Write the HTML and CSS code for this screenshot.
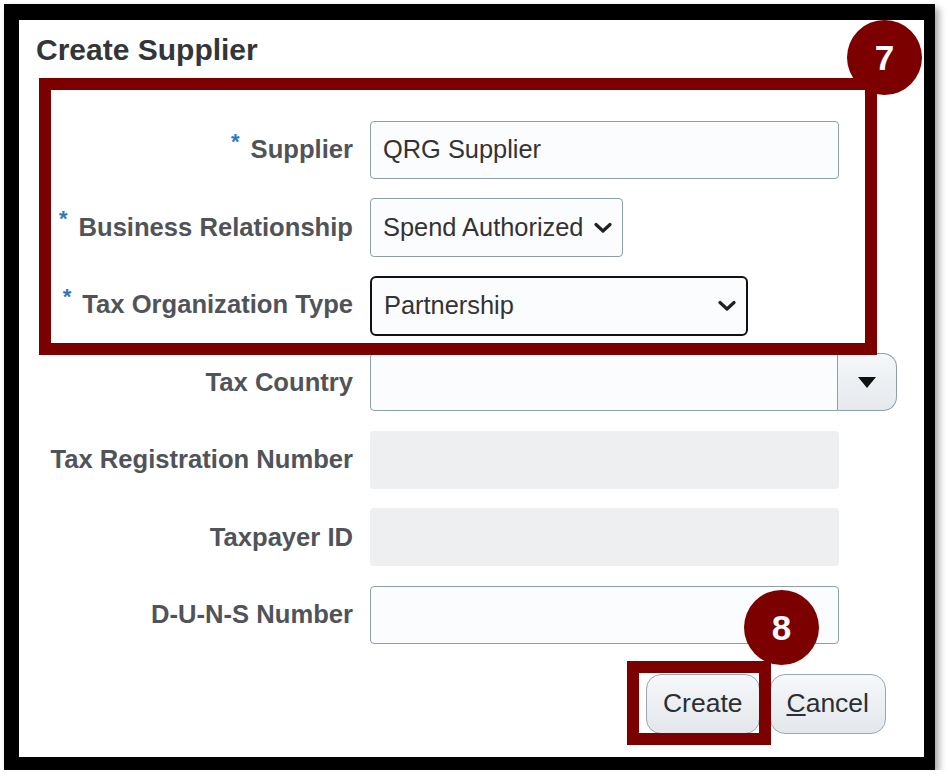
FILE: index.html
```html
<!DOCTYPE html>
<html lang="en">
<head>
  <meta charset="UTF-8">
  <meta name="viewport" content="width=device-width, initial-scale=1.0">
  <title>Create Supplier</title>
  <link rel="stylesheet" href="styles.css">
</head>
<body>
  <div class="marco">
    <h1 class="titulo">Create Supplier</h1>
    <div class="formulario">
      <label class="etiqueta"><span class="req">*</span>Supplier</label>
      <div class="campo ancho"><span>QRG Supplier</span></div>

      <label class="etiqueta"><span class="req">*</span>Business Relationship</label>
      <div class="campo lista corto">
        <span>Spend Authorized</span>
        <svg class="chevron" width="18" height="12" viewBox="0 0 18 12"><path d="M2 2.5 L9 9 L16 2.5" fill="none" stroke="#222" stroke-width="3.2" stroke-linecap="round" stroke-linejoin="round"/></svg>
      </div>

      <label class="etiqueta"><span class="req">*</span>Tax Organization Type</label>
      <div class="campo lista medio activo">
        <span>Partnership</span>
        <svg class="chevron" width="18" height="12" viewBox="0 0 18 12"><path d="M2 2.5 L9 9 L16 2.5" fill="none" stroke="#222" stroke-width="3.2" stroke-linecap="round" stroke-linejoin="round"/></svg>
      </div>

      <label class="etiqueta">Tax Country</label>
      <div class="combo">
        <div class="campo combo-texto"></div>
        <div class="combo-boton">
          <svg width="20" height="13" viewBox="0 0 20 13"><path d="M1 1 H19 L10 12 Z" fill="#111"/></svg>
        </div>
      </div>

      <label class="etiqueta">Tax Registration Number</label>
      <div class="campo ancho inactivo"></div>

      <label class="etiqueta">Taxpayer ID</label>
      <div class="campo ancho inactivo"></div>

      <label class="etiqueta">D-U-N-S Number</label>
      <div class="campo ancho"></div>
    </div>

    <div class="acciones">
      <button class="boton">Create</button>
      <button class="boton"><u>C</u>ancel</button>
    </div>

    <div class="resalte resalte-form"></div>
    <div class="resalte resalte-boton"></div>
    <div class="paso paso-7">7</div>
    <div class="paso paso-8">8</div>
  </div>
</body>
</html>
```

FILE: styles.css
```css
body {
  margin: 0;
  background: #fff;
  font-family: "Liberation Sans", Arial, sans-serif;
}
.marco {
  position: relative;
  box-sizing: border-box;
  width: 931px;
  height: 766px;
  margin: 4px 0 0 4px;
  border-style: solid;
  border-color: #000;
  border-width: 16px 11px 13px 15px;
  box-shadow: 4px 4px 7px rgba(0,0,0,0.35);
  background: #fff;
  padding: 13px 0 0 17px;
}
.titulo {
  margin: 0;
  font-size: 30px;
  font-weight: bold;
  line-height: normal;
  color: #333639;
}
.formulario {
  display: grid;
  grid-template-columns: 317px 1fr;
  grid-auto-rows: 58px;
  column-gap: 17px;
  row-gap: 19.5px;
  margin-top: 53.5px;
}
.etiqueta {
  display: flex;
  align-items: center;
  justify-content: flex-end;
  font-size: 25.6px;
  font-weight: bold;
  color: #505459;
  white-space: nowrap;
}
.req {
  color: #2a7ab9;
  font-size: 22px;
  margin-right: 11px;
  position: relative;
  top: -8px;
}
.campo {
  box-sizing: border-box;
  height: 58px;
  display: flex;
  align-items: center;
  padding: 0 12px;
  border: 1.5px solid #8d9fac;
  border-radius: 4px;
  background: #fbfcfe;
  font-size: 25.4px;
  color: #333;
}
.ancho {
  width: 469px;
}
.corto {
  width: 253px;
  height: 59px;
}
.medio {
  width: 378px;
  height: 60px;
}
.lista {
  justify-content: space-between;
  padding-right: 10px;
}
.activo {
  border: 2.5px solid #111;
  border-radius: 6px;
}
.inactivo {
  border: none;
  background: #eeeff1;
}
.combo {
  display: flex;
  height: 58px;
}
.combo-texto {
  width: 468px;
  border-radius: 4px 0 0 4px;
}
.combo-boton {
  box-sizing: border-box;
  width: 59px;
  height: 58px;
  display: flex;
  align-items: center;
  justify-content: center;
  border: 1.5px solid #8d9fac;
  border-left: none;
  border-radius: 0 14px 14px 0;
  background: linear-gradient(#f5f7f9, #e5e9ed);
}
.acciones {
  display: flex;
  justify-content: flex-end;
  gap: 10px;
  margin: 30px 38px 0 0;
}
.boton {
  box-sizing: border-box;
  height: 60px;
  padding: 0 16px;
  font-family: "Liberation Sans", Arial, sans-serif;
  font-size: 26.5px;
  color: #2b2f33;
  border: 1.5px solid #97a8b5;
  border-radius: 15px;
  background: linear-gradient(#f6f8fa, #e3e7eb);
}
.resalte {
  position: absolute;
  box-sizing: border-box;
  border: 12px solid #7c0000;
}
.resalte-form {
  left: 20px;
  top: 58px;
  width: 838px;
  height: 277px;
}
.resalte-boton {
  left: 608px;
  top: 641px;
  width: 144px;
  height: 84px;
}
.paso {
  position: absolute;
  width: 75px;
  height: 75px;
  border-radius: 50%;
  background: #7c0000;
  color: #fff;
  font-size: 35px;
  font-weight: bold;
  display: flex;
  align-items: center;
  justify-content: center;
}
.paso-7 {
  left: 828px;
  top: 0;
}
.paso-8 {
  left: 725px;
  top: 570px;
}
```
